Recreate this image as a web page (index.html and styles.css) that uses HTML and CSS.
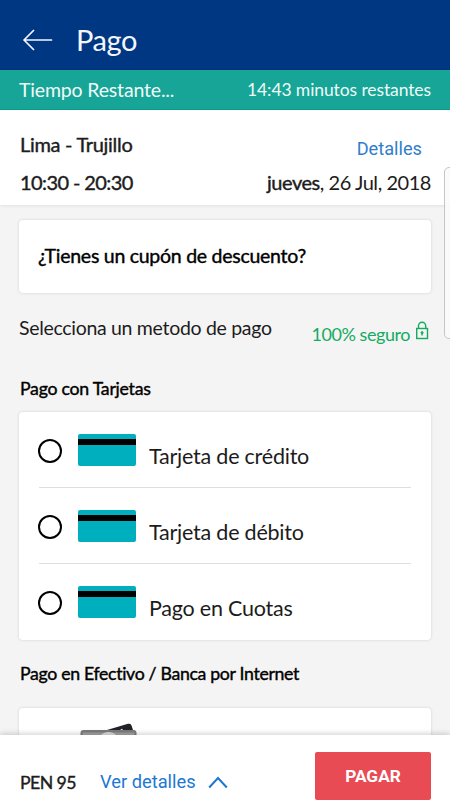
FILE: index.html
```html
<!DOCTYPE html>
<html lang="es">
<head>
  <meta charset="UTF-8" />
  <meta name="viewport" content="width=device-width, initial-scale=1.0"/>
  <title>Pago</title>
  <link rel="stylesheet" href="styles.css">
</head>
<body>
  <!-- Header -->
  <header class="navbar">
    <svg class="back-icon" width="30" height="22" viewBox="0 0 30 22" fill="none" stroke="currentColor" stroke-width="1.7" stroke-linecap="round" stroke-linejoin="round">
      <path d="M28.5 11H1M10.5 1.5L1 11L10.5 20.5"/>
    </svg>
    <h1>Pago</h1>
  </header>

  <!-- Countdown -->
  <div class="timer">
    <span class="timer-label">Tiempo Restante...</span>
    <span class="timer-value">14:43 minutos restantes</span>
  </div>

  <!-- Trip summary -->
  <section class="trip">
    <div class="trip-row">
      <span class="strong trip-route">Lima - Trujillo</span>
      <a class="trip-link">Detalles</a>
    </div>
    <div class="trip-row">
      <span class="strong trip-hours">10:30 - 20:30</span>
      <span class="trip-date"><span class="strong">jueves</span>, 26 Jul, 2018</span>
    </div>
  </section>

  <!-- Payment options -->
  <main class="content">
    <div class="card coupon">
      <span class="strong">¿Tienes un cupón de descuento?</span>
    </div>

    <div class="method-head">
      <span class="method-title">Selecciona un metodo de pago</span>
      <span class="secure">
        <span>100% seguro</span>
        <svg width="14" height="19" viewBox="0 0 14 19" fill="none" stroke="currentColor" stroke-width="1.4">
          <rect x="1.7" y="7.5" width="10.8" height="10"/>
          <path d="M3.5 7.5V4.8a3.6 3.6 0 0 1 7.2 0V7.5"/>
          <circle cx="7.1" cy="11.7" r="1.1" fill="currentColor" stroke-width="0.8"/>
          <path d="M7.1 12v2.4"/>
        </svg>
      </span>
    </div>

    <h2 class="strong cards-title">Pago con Tarjetas</h2>
    <div class="card options">
      <label class="option">
        <span class="radio"></span>
        <span class="card-icon"></span>
        <span class="option-name">Tarjeta de crédito</span>
      </label>
      <label class="option">
        <span class="radio"></span>
        <span class="card-icon"></span>
        <span class="option-name">Tarjeta de débito</span>
      </label>
      <label class="option">
        <span class="radio"></span>
        <span class="card-icon"></span>
        <span class="option-name">Pago en Cuotas</span>
      </label>
    </div>

    <h2 class="strong cash-title">Pago en Efectivo / Banca por Internet</h2>
    <div class="card cash">
      <svg width="58" height="40" viewBox="0 0 58 40">
        <path d="M28 8L49 1.8Q52 1 52.7 4L54 8Z" fill="#242226"/>
        <path d="M41 7.8L43 6.8L44 8Z" fill="#fff"/>
        <rect x="1.5" y="8" width="56" height="32" rx="3" fill="#7b7b7b"/>
        <rect x="3.5" y="10.5" width="52" height="28" fill="#a3a3a3"/>
        <circle cx="29.5" cy="21" r="11" fill="#dedede"/>
      </svg>
    </div>
  </main>

  <!-- Fast scroll handle -->
  <div class="scroll-handle"></div>

  <!-- Bottom bar -->
  <footer class="pay-bar">
    <span class="strong total">PEN 95</span>
    <a class="more">Ver detalles</a>
    <svg class="chevron" width="20" height="13" viewBox="0 0 20 13" fill="none" stroke="currentColor" stroke-width="2">
      <path d="M1.2 11.5L10 2L18.8 11.5"/>
    </svg>
    <button class="pay-btn">PAGAR</button>
  </footer>
</body>
</html>
```

FILE: styles.css
```css
* {
  box-sizing: border-box;
}
body {
  margin: 0;
  width: 450px;
  height: 800px;
  overflow: hidden;
  display: flex;
  flex-direction: column;
  position: relative;
  font-family: Lato, sans-serif;
  color: #1c1c1c;
  background-color: #f4f4f4;
}
h1, h2 {
  margin: 0;
  font-weight: 400;
}
/* Regular weight thickened slightly, lighter than real bold */
.strong {
  -webkit-text-stroke: 0.4px currentColor;
}

.navbar {
  flex: none;
  height: 70px;
  padding: 10px 23px 0;
  display: flex;
  align-items: center;
  background-color: #003783;
  border-bottom: 1px solid #002d80;
  color: #f4f6fb;
}
.navbar h1 {
  margin-left: 23px;
  font-size: 29px;
  line-height: 40px;
  letter-spacing: -0.4px;
}

.timer {
  flex: none;
  height: 40px;
  padding: 0 19px;
  display: flex;
  align-items: center;
  justify-content: space-between;
  background-color: #16a596;
  border-bottom: 1px solid #0c9d8c;
  color: #f0faf9;
}
.timer-label {
  font-size: 19.5px;
  letter-spacing: -0.17px;
}
.timer-value {
  font-size: 17.5px;
  letter-spacing: -0.1px;
}

.trip {
  flex: none;
  height: 95px;
  padding: 16px 19px 0 20px;
  background-color: #fff;
  box-shadow: 0 1px 3px rgba(0, 0, 0, 0.08);
}
.trip-row {
  height: 38px;
  display: flex;
  justify-content: space-between;
  font-size: 20px;
  line-height: 36px;
}
.trip-route {
  letter-spacing: -0.3px;
}
.trip-hours {
  letter-spacing: -0.6px;
}
.trip-date {
  letter-spacing: -0.45px;
}
.trip-link {
  margin-right: 9px;
  padding-top: 5px;
  font-family: Roboto, sans-serif;
  font-size: 18.2px;
  color: #2f7dcd;
}

.content {
  flex: 1;
  min-height: 0;
  overflow: hidden;
  padding: 15px 19px 0;
}
.card {
  background-color: #fff;
  border-radius: 4px;
  box-shadow: 0 0 3px rgba(0, 0, 0, 0.15);
}
.coupon {
  height: 73px;
  padding-left: 19px;
  font-size: 19.5px;
  letter-spacing: -0.27px;
  line-height: 71px;
  color: #000;
}
.method-head {
  height: 72px;
  display: flex;
  justify-content: space-between;
  font-size: 19.5px;
  letter-spacing: -0.31px;
  line-height: 70px;
}
.secure {
  height: 72px;
  padding: 9px 2px 0 0;
  display: flex;
  align-items: center;
  gap: 5px;
  font-size: 18px;
  letter-spacing: -0.45px;
  color: #14ab62;
}
.secure svg {
  margin-top: -7px;
}
.cards-title {
  height: 46px;
  padding-left: 1px;
  font-size: 17.7px;
  letter-spacing: -0.25px;
  line-height: 47px;
  color: #000;
}

.options {
  height: 228px;
  margin-top: 1px;
  padding: 0 20px;
}
.option {
  height: 76px;
  display: flex;
  align-items: center;
  border-bottom: 1.5px solid #dedede;
}
.option:last-child {
  height: 75px;
  border-bottom: none;
}
.radio {
  width: 24px;
  height: 24px;
  margin: 3px 16px 0 -1px;
  border: 2px solid #000;
  border-radius: 50%;
}
.card-icon {
  width: 58px;
  height: 32px;
  border-radius: 2px;
  background: linear-gradient(#00afbe 5px, #000 5px, #000 11px, #00afbe 11px);
}
.option-name {
  margin: 13px 0 0 13px;
  font-size: 21.5px;
  letter-spacing: -0.22px;
  line-height: 26px;
}

.cash-title {
  height: 68px;
  padding-left: 1px;
  font-size: 17.7px;
  letter-spacing: -0.32px;
  line-height: 68px;
  color: #000;
}
.cash {
  height: 76px;
  padding: 14px 0 0 60px;
}

.scroll-handle {
  position: absolute;
  top: 167px;
  right: -8px;
  width: 14px;
  height: 172px;
  border: 1px solid #c6c6c6;
  border-radius: 5px;
  background-color: rgba(250, 250, 250, 0.85);
}

.pay-bar {
  flex: none;
  position: relative;
  height: 65px;
  padding: 17px 19px 0 20px;
  display: flex;
  background-color: #fff;
  box-shadow: 0 -1px 6px rgba(0, 0, 0, 0.2);
  line-height: 60px;
}
.total {
  width: 80px;
  font-size: 17.7px;
  letter-spacing: -0.6px;
  line-height: 62px;
}
.more {
  font-family: Roboto, sans-serif;
  font-size: 18.3px;
  color: #1b78d3;
}
.chevron {
  margin: 24px 0 0 12px;
  color: #1b78d3;
}
.pay-btn {
  width: 116px;
  height: 48px;
  margin-left: auto;
  padding: 0;
  border: none;
  border-radius: 2px;
  background-color: #e94b54;
  color: #fff;
  font-family: Roboto, sans-serif;
  font-size: 17.3px;
  font-weight: 700;
}
```
